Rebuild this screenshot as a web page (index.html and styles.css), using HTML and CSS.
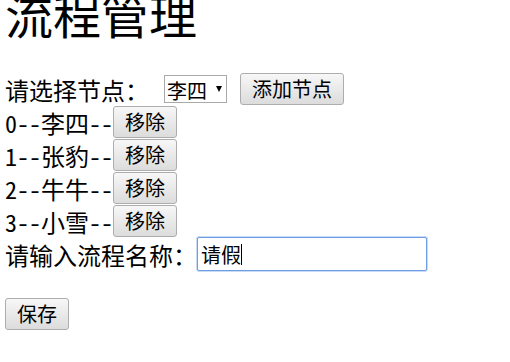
FILE: index.html
```html
<!DOCTYPE html>
<html>
<head>
  <meta charset="utf-8">
  <title>流程管理</title>
  <link rel="stylesheet" href="styles.css">
</head>
<body>
  <h1 class="title">流程管理</h1>

  <div class="form">
    <div class="row">
      <span>请选择节点：</span>
      <span class="select-wrap">
        <select class="node-select">
          <option>李四</option>
          <option>张豹</option>
          <option>牛牛</option>
          <option>小雪</option>
        </select>
      </span>
      <button class="btn add-btn" type="button">添加节点</button>
    </div>

    <div class="row"><span>0--李四--</span><button class="btn" type="button">移除</button></div>
    <div class="row"><span>1--张豹--</span><button class="btn" type="button">移除</button></div>
    <div class="row"><span>2--牛牛--</span><button class="btn" type="button">移除</button></div>
    <div class="row"><span>3--小雪--</span><button class="btn" type="button">移除</button></div>

    <div class="row">
      <span>请输入流程名称：</span>
      <span class="input-wrap">
        <input class="name-input" type="text" value="请假">
        <span class="caret"></span>
      </span>
    </div>
  </div>

  <button class="btn save-btn" type="button">保存</button>
</body>
</html>
```

FILE: styles.css
```css
body {
  margin: 0;
  padding-left: 5px;
  font-family: "Noto Sans CJK SC", sans-serif;
  font-size: 24px;
  color: #000;
  background: #fff;
  font-feature-settings: "hwid";
}

.title {
  font-size: 48px;
  line-height: 48px;
  font-weight: normal;
  margin: -11px 0 0 0;
}

.form {
  display: flex;
  flex-direction: column;
  gap: 1px;
  margin-top: 36px;
}

.row {
  display: flex;
  align-items: center;
  height: 32px;
  white-space: nowrap;
}

.btn {
  font-family: "Noto Sans CJK SC", sans-serif;
  font-feature-settings: "hwid";
  font-size: 20px;
  line-height: 1;
  height: 32px;
  padding: 0 11px;
  border: 1px solid #adadad;
  border-radius: 3px;
  background: linear-gradient(#f7f7f7, #dcdcdc);
  color: #000;
}

.add-btn {
  margin-left: 13px;
}

.select-wrap {
  position: relative;
  display: flex;
  margin-left: 15px;
}

.select-wrap::after {
  content: "";
  position: absolute;
  right: 5px;
  top: 11px;
  border-left: 3px solid transparent;
  border-right: 3px solid transparent;
  border-top: 6px solid #000;
  pointer-events: none;
}

.node-select {
  appearance: none;
  -webkit-appearance: none;
  font-family: "Noto Sans CJK SC", sans-serif;
  font-size: 20px;
  width: 63px;
  height: 28px;
  padding: 0 0 0 2px;
  border: 1px solid #a9a9a9;
  border-radius: 0;
  background: #fff;
  color: #000;
}

.input-wrap {
  position: relative;
}

.name-input {
  display: block;
  box-sizing: border-box;
  width: 230px;
  height: 34px;
  padding: 0 3px;
  font-family: "Noto Sans CJK SC", sans-serif;
  font-size: 20px;
  color: #000;
  border: 1px solid #6e9de4;
  border-radius: 2px;
  box-shadow: 0 0 0 1px #c8dbf6;
  outline: none;
}

.caret {
  position: absolute;
  left: 44px;
  top: 7px;
  width: 1px;
  height: 21px;
  background: #000;
}

.save-btn {
  margin-top: 28px;
}
```
